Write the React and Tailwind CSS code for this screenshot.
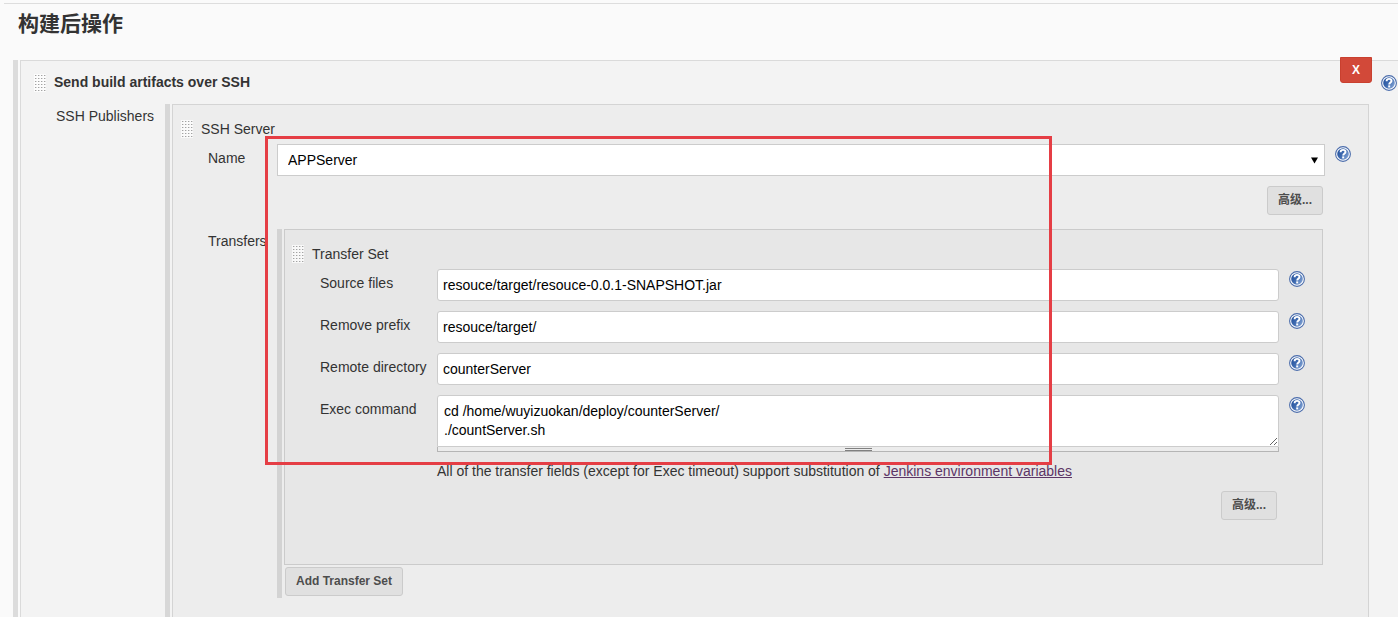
function HelpIcon() {
  return (
    <svg viewBox="0 0 16 16" className="block size-4" aria-hidden="true">
      <defs>
        <linearGradient id="help-fill" x1="0" y1="0.2" x2="1" y2="0.8">
          <stop offset="0" stopColor="#23509c" />
          <stop offset="0.45" stopColor="#3f6bb0" />
          <stop offset="1" stopColor="#86a6d6" />
        </linearGradient>
      </defs>
      <circle cx="8" cy="8" r="7.4" fill="#fff" stroke="#4a6cab" strokeWidth="1.1" />
      <circle cx="8" cy="8" r="5.8" fill="url(#help-fill)" />
      <path
        d="M5.6 6.2C5.6 4.6 6.7 3.9 8.1 3.9C9.6 3.9 10.5 4.7 10.5 5.9C10.5 7.4 8.3 7.5 8.2 9.5"
        fill="none"
        stroke="#fff"
        strokeWidth="1.9"
      />
      <rect x="7.2" y="10.4" width="2" height="2" fill="#fff" />
    </svg>
  )
}

function HelpButton({ topic }) {
  return (
    <button type="button" aria-label={`Help for ${topic}`} className="block size-4 shrink-0">
      <HelpIcon />
    </button>
  )
}

function Grip() {
  const columns = [1, 4, 7, 10]
  const rows = [1, 4, 7, 10, 13, 16]
  return (
    <svg width="12" height="18" className="shrink-0" aria-hidden="true">
      {rows.map((y) =>
        columns.map((x) => (
          <g key={`${x}-${y}`}>
            <rect x={x - 1} y={y - 1} width="3" height="3" fill="#fff" fillOpacity="0.7" />
            <rect x={x} y={y} width="1" height="1" fill="#a3a3a3" />
            <rect x={x + 1} y={y} width="1" height="1" fill="#dadada" />
          </g>
        )),
      )}
    </svg>
  )
}

function Button({ children }) {
  return (
    <button
      type="button"
      className="h-[29px] rounded-[3px] border border-[#cbcbcb] bg-[#e0e0e0] px-[10px] pb-px text-xs font-bold text-[#4d4d4d]"
    >
      {children}
    </button>
  )
}

function Field({ id, label, labelWidth, children }) {
  return (
    <div className="flex items-start">
      <label htmlFor={id} className={`${labelWidth} shrink-0 pt-1 pl-[35px] whitespace-nowrap`}>
        {label}
      </label>
      <div className="min-w-0 flex-1">{children}</div>
      <div className="w-[43px] shrink-0 pt-[2px] pl-[10px]">
        <HelpButton topic={label} />
      </div>
    </div>
  )
}

function TextField({ id, label, value }) {
  return (
    <Field id={id} label={label} labelWidth="w-[152px]">
      <input
        id={id}
        type="text"
        defaultValue={value}
        className="block h-8 w-full rounded-[3px] border border-[#ccc] bg-white px-[5px] text-black outline-none"
      />
    </Field>
  )
}

function TransferSet() {
  return (
    <section className="mr-[45px] border border-[#cbcbcb] bg-[#e7e7e7] pb-11">
      <div className="flex h-[39px] items-center gap-2 pt-[9px] pl-[7px]">
        <Grip />
        <h4>Transfer Set</h4>
      </div>
      <div className="flex flex-col gap-[10px]">
        <TextField id="source" label="Source files" value="resouce/target/resouce-0.0.1-SNAPSHOT.jar" />
        <TextField id="prefix" label="Remove prefix" value="resouce/target/" />
        <TextField id="directory" label="Remote directory" value="counterServer" />
        <Field id="exec" label="Exec command" labelWidth="w-[152px]">
          <textarea
            id="exec"
            defaultValue={'cd /home/wuyizuokan/deploy/counterServer/\n./countServer.sh'}
            className="block h-[52px] w-full rounded-t-[3px] border border-[#ccc] bg-white px-[6px] pt-[6px] pb-1 leading-[19px] text-black outline-none"
          />
          <div className="flex h-[5px] items-center justify-center border-x border-b border-[#b5b5b5] bg-[#ececec]">
            <div className="h-[3px] w-[27px] border-y border-[#808080]" />
          </div>
        </Field>
      </div>
      <p className="mt-[9px] mb-[10px] pl-[152px]">
        All of the transfer fields (except for Exec timeout) support substitution of{' '}
        <a href="#variables" className="text-[#5c3566] underline">
          Jenkins environment variables
        </a>
      </p>
      <div className="flex justify-end pr-[45px]">
        <Button>高级...</Button>
      </div>
    </section>
  )
}

function SshServer() {
  return (
    <section className="min-w-0 flex-1 border-x border-t border-[#d4d4d4] bg-[#ededed] pb-[18px]">
      <div className="flex h-[39px] items-center gap-2 pt-[9px] pl-2">
        <Grip />
        <h3>SSH Server</h3>
      </div>
      <Field id="server" label="Name" labelWidth="w-[104px]">
        <div className="relative">
          <select
            id="server"
            className="block h-8 w-full appearance-none border border-[#ccc] bg-white px-[10px] text-black outline-none"
          >
            <option>APPServer</option>
          </select>
          <svg
            viewBox="0 0 7 7"
            className="pointer-events-none absolute top-[13px] right-[7px] size-[7px]"
            aria-hidden="true"
          >
            <path d="M0 0.5H7L3.5 6.5Z" fill="#000" />
          </svg>
        </div>
      </Field>
      <div className="mt-[10px] mb-[14px] flex justify-end pr-[45px]">
        <Button>高级...</Button>
      </div>
      <div className="flex">
        <div className="w-[104px] shrink-0 pt-[2px] pl-[35px]">Transfers</div>
        <div className="min-w-0 flex-1 border-l-5 border-[#d3d3d3] pb-[2px] pl-[2px]">
          <TransferSet />
          <div className="pt-[2px] pl-px">
            <Button>Add Transfer Set</Button>
          </div>
        </div>
      </div>
    </section>
  )
}

export default function App() {
  return (
    <main className="relative flex min-h-screen flex-col bg-[#fafafa] pt-[3px] font-['Liberation_Sans','Noto_Sans_CJK_SC',sans-serif] text-sm leading-5 text-[#333]">
      <hr className="ml-1 border-[#ddd]" />
      <h1 className="h-14 pt-1 pl-[18px] text-[21px] leading-8 font-bold">构建后操作</h1>
      <div className="ml-[13px] flex flex-1 border-l-5 border-[#dcdcdc] pl-[2px]">
        <section className="relative flex min-w-0 flex-1 flex-col border-t border-l border-[#dadada] bg-[#f3f3f3]">
          <div className="flex h-[43px] items-center gap-2 pl-[13px]">
            <Grip />
            <h2 className="pb-[2px] font-bold">Send build artifacts over SSH</h2>
            <div className="ml-auto pr-px">
              <HelpButton topic="Send build artifacts over SSH" />
            </div>
          </div>
          <button
            type="button"
            className="absolute -top-1 right-[26px] h-[26px] w-8 rounded-b-[3px] border border-[#c9402f] bg-[#d24939] text-xs font-bold text-white"
          >
            X
          </button>
          <div className="flex flex-1">
            <div className="w-36 shrink-0 pt-[2px] pl-[35px]">SSH Publishers</div>
            <div className="mr-[29px] flex min-w-0 flex-1 border-l-5 border-[#d7d7d7] pl-[2px]">
              <SshServer />
            </div>
          </div>
        </section>
      </div>
      <div className="pointer-events-none absolute top-[136px] left-[265px] h-[329px] w-[787px] border-3 border-[#e53e45]" />
    </main>
  )
}
